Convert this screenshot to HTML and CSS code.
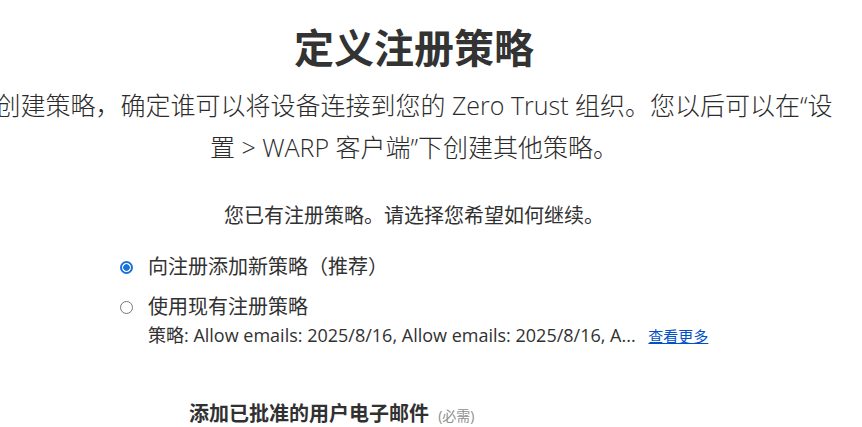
FILE: index.html
```html
<!DOCTYPE html>
<html lang="zh-CN">
<head>
    <meta charset="UTF-8">
    <meta name="viewport" content="width=device-width, initial-scale=1.0">
    <title>定义注册策略</title>
    <link rel="stylesheet" href="styles.css">
</head>
<body>
    <main class="page">
        <section class="intro">
            <h1 class="intro-title">定义注册策略</h1>
            <p class="intro-lead">创建策略，确定谁可以将设备连接到您的 Zero Trust 组织。您以后可以在“设置 &gt; WARP 客户端”下创建其他策略。</p>
            <p class="intro-notice">您已有注册策略。请选择您希望如何继续。</p>
        </section>

        <!-- Enrollment policy choice -->
        <div class="options">
            <label class="option">
                <span class="radio radio-checked"></span>
                <span class="option-label">向注册添加新策略（推荐）</span>
            </label>
            <label class="option">
                <span class="radio"></span>
                <span class="option-label">使用现有注册策略</span>
            </label>
            <div class="option-detail">
                <span class="policy-list">策略: Allow emails: 2025/8/16, Allow emails: 2025/8/16, A...</span>
                <a href="#" class="more-link">查看更多</a>
            </div>
        </div>

        <div class="field">
            <h2 class="field-title">添加已批准的用户电子邮件 <span class="field-hint">(必需)</span></h2>
        </div>
    </main>
</body>
</html>
```

FILE: styles.css
```css
body {
    margin: 0;
    background: #fff;
    color: #313131;
    font-family: "Open Sans", "Noto Sans CJK SC", sans-serif;
    overflow: hidden;
}

.page {
    padding-right: 34px;
}

/* Heading block, centred over the form */
.intro {
    display: flex;
    flex-direction: column;
    align-items: center;
    text-align: center;
}

.intro-title {
    margin: 24px 0 0;
    font-size: 40px;
    line-height: 48px;
    font-weight: 700;
    color: #333;
}

.intro-lead {
    width: 850px;
    flex-shrink: 0;
    margin: 12px 0 0;
    font-size: 25px;
    line-height: 42px;
    font-weight: 300;
    color: #2b2b2b;
}

.intro-notice {
    margin: 34px 0 0;
    font-size: 20px;
    line-height: 28px;
    color: #313131;
}

/* Radio choices */
.options {
    margin: 24px 0 0 120px;
}

.option {
    display: flex;
    align-items: center;
    gap: 15px;
    font-size: 20px;
    line-height: 26px;
    cursor: pointer;
}

.option + .option {
    margin-top: 14px;
}

.radio {
    box-sizing: border-box;
    width: 13px;
    height: 13px;
    border: 1px solid #767676;
    border-radius: 50%;
    background: #fff;
    flex-shrink: 0;
}

.radio-checked {
    border: 2px solid #1a73d9;
    background: radial-gradient(circle, #1a73d9 0 3px, #fff 3.5px);
}

.option-detail {
    margin: 3px 0 0 28px;
    font-size: 18px;
    line-height: 24px;
}

.more-link {
    margin-left: 8px;
    font-size: 15px;
    color: #0051c3;
    text-decoration: underline;
}

/* Email field */
.field {
    margin: 52px 0 0 189px;
}

.field-title {
    margin: 0;
    font-size: 20px;
    line-height: 28px;
    font-weight: 700;
    color: #313131;
}

.field-hint {
    margin-left: 4px;
    font-size: 14px;
    font-weight: 400;
    color: #8e8e8e;
}
```
